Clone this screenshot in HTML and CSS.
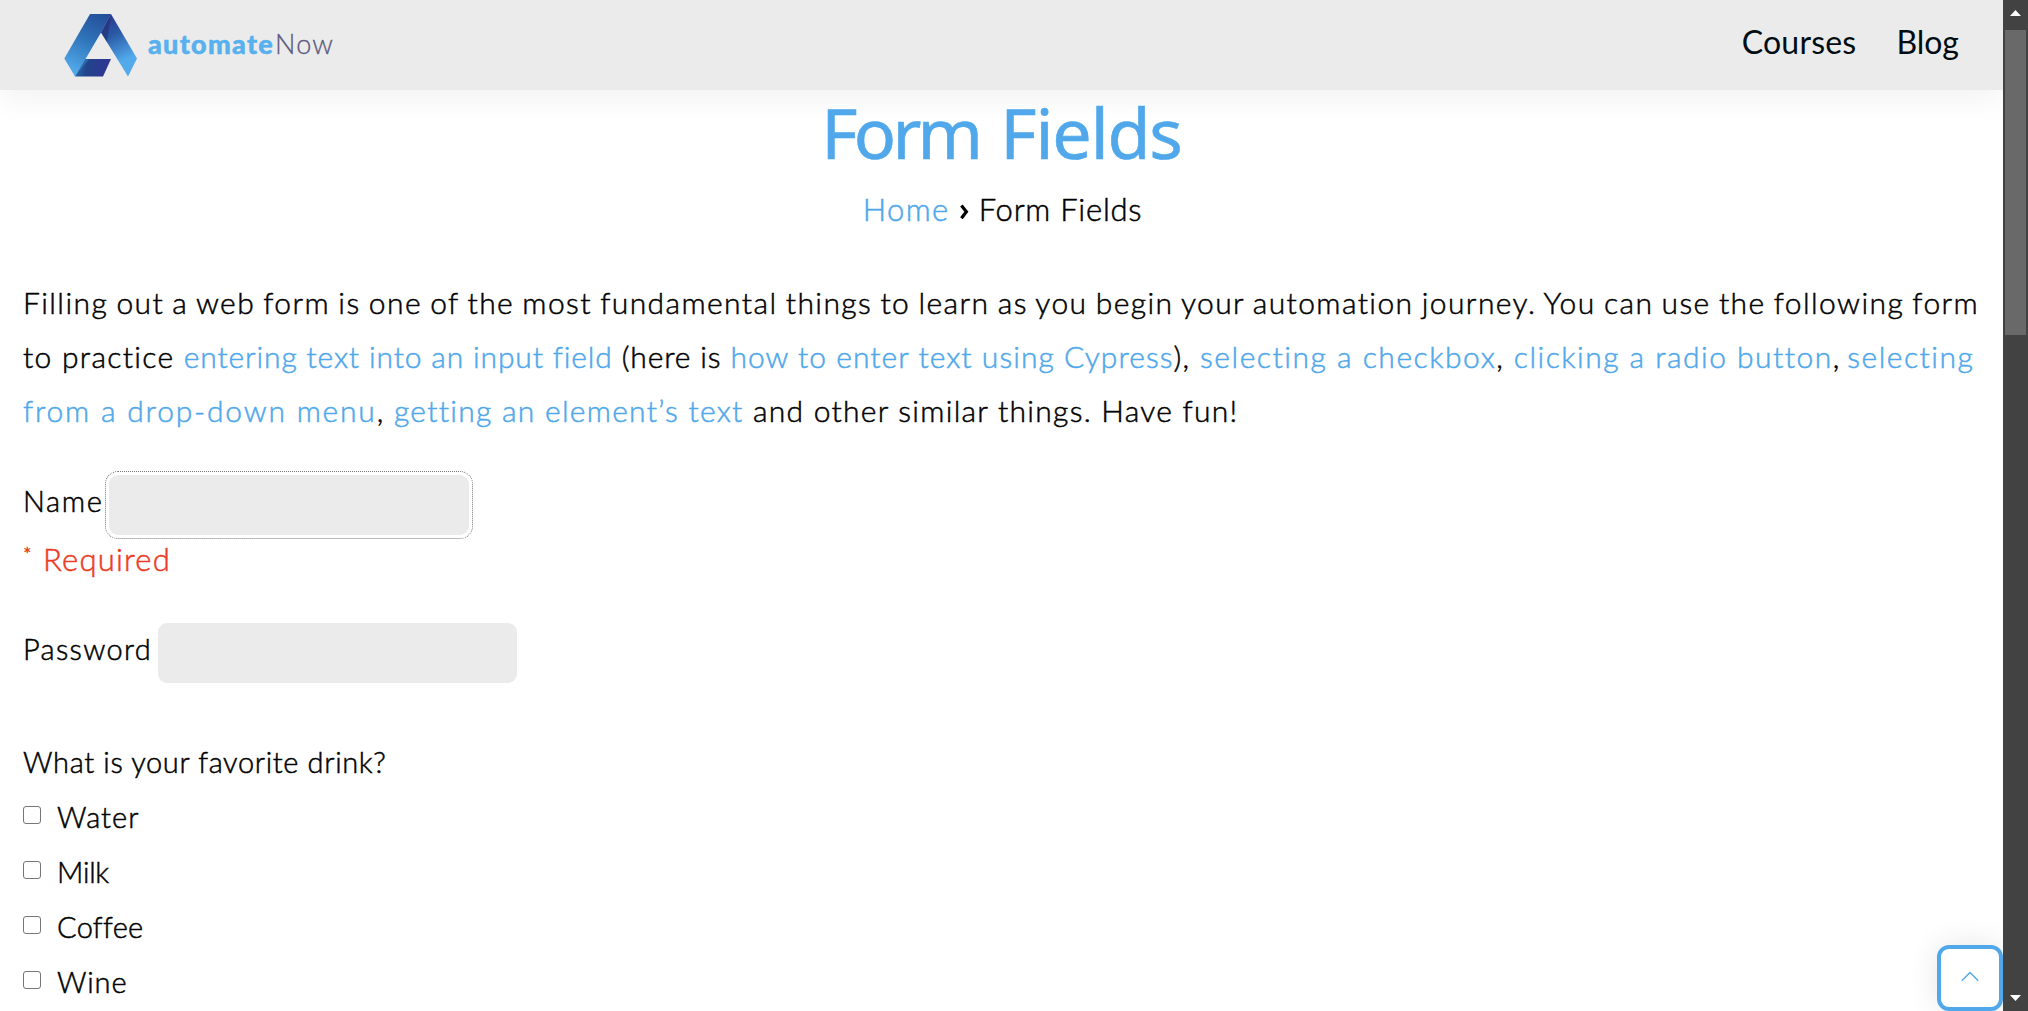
FILE: index.html
```
<!DOCTYPE html>
<html lang="en">
<head>
<meta charset="utf-8">
<title>Form Fields</title>
<link rel="stylesheet" href="styles.css">
</head>
<body>
<div class="page">
  <header class="site-header">
    <a class="brand">
      <svg class="brand-mark" width="74" height="64" viewBox="0 0 74 64">
        <defs>
          <linearGradient id="left" x1="38" y1="0" x2="10" y2="58" gradientUnits="userSpaceOnUse">
            <stop offset="0" stop-color="#24509a"/><stop offset=".45" stop-color="#2f72b8"/><stop offset="1" stop-color="#52aaeb"/>
          </linearGradient>
          <linearGradient id="right" x1="44" y1="2" x2="68" y2="52" gradientUnits="userSpaceOnUse">
            <stop offset="0" stop-color="#2b3990"/><stop offset=".35" stop-color="#2a5aa6"/><stop offset=".85" stop-color="#52aaeb"/>
          </linearGradient>
          <linearGradient id="base" x1="14" y1="52" x2="38" y2="56" gradientUnits="userSpaceOnUse">
            <stop offset="0" stop-color="#2566a8"/><stop offset=".35" stop-color="#22458c"/><stop offset="1" stop-color="#2b3990"/>
          </linearGradient>
        </defs>
        <path d="M26 0H47L37 18.5 21.5 45 11 62.5 .3 44.5Z" fill="url(#left)"/>
        <path d="M47 0 73 44.5 64 62.5 37 18.5Z" fill="url(#right)"/>
        <path d="M47 0 37 18.5 43 28Z" fill="#242c70" opacity=".55"/>
        <path d="M21.5 45H47L39 62.5H11Z" fill="url(#base)"/>
        <path d="M11 62.5 21.5 45 25 45.5Z" fill="#2a75b5" opacity=".7"/>
      </svg>
      <span class="brand-strong">automate</span><span class="brand-light">Now</span>
    </a>
    <nav class="nav"><a>Courses</a><a class="nav-blog">Blog</a></nav>
  </header>
  <main>
    <h1><span class="title-form">Form</span> <span class="title-fields">Fields</span></h1>
    <div class="crumbs"><a class="home">Home</a><svg width="9" height="16" viewBox="0 0 9 16"><path d="M1.4 1.5 6.4 7.8 1.4 14.2" fill="none" stroke="#000" stroke-width="3.2"/></svg><span class="here">Form Fields</span></div>
    <p class="intro">
      <span class="line first">Filling out a web form is one of the most fundamental things to learn as you begin your automation journey. You can use the following form</span>
      <span class="line"><span class="s130">to practice </span><a class="s085">entering text into an input field</a><span class="s085"> (here is </span><a class="s104">how to enter text using Cypress</a><span class="s137">), </span><a class="s155">selecting a checkbox</a><span class="s137">, </span><a class="s148">clicking a radio button</a>, <a class="s148">selecting</a></span>
      <span class="line"><a class="s180">from a drop-down menu</a><span class="s130">, </span><a class="s127">getting an element’s text</a><span class="last"> and other similar things. Have fun!</span></span>
    </p>
    <form>
      <div class="field"><label class="name-label">Name</label><input class="focused" type="text"></div>
      <div class="required"><sup>*</sup>Required</div>
      <div class="field"><label class="password-label">Password</label><input class="password" type="password"></div>
      <div class="question">What is your favorite drink?</div>
      <label class="choice"><span class="box"></span><span class="s110">Water</span></label>
      <label class="choice"><span class="box"></span><span class="milk">Milk</span></label>
      <label class="choice"><span class="box"></span><span class="coffee">Coffee</span></label>
      <label class="choice"><span class="box"></span><span class="s085">Wine</span></label>
    </form>
  </main>
  <a class="to-top"><svg width="18" height="11" viewBox="0 0 18 11"><path d="M.8 9.8 9 1.5 17.2 9.8" fill="none" stroke="#50a8eb" stroke-width="1.4"/></svg></a>
</div>
<div class="scrollbar">
  <svg class="arrow" width="11" height="6" viewBox="0 0 11 6"><path d="M0 6 5.5 0 11 6Z" fill="#fff"/></svg>
  <div class="thumb"></div>
  <svg class="arrow" width="11" height="6" viewBox="0 0 11 6"><path d="M0 0 5.5 6 11 0Z" fill="#fff"/></svg>
</div>
</body>
</html>
```
FILE: styles.css
```
* { box-sizing: border-box; }
body {
  margin: 0;
  height: 1011px;
  display: flex;
  overflow: hidden;
  background: #fff;
  color: #000;
  font: 300 30px/54px Lato, sans-serif;
  -webkit-text-stroke: .5px currentColor;
}
a { color: #50a8eb; text-decoration: none; }
.page { position: relative; width: 2003px; height: 1011px; overflow: hidden; }

.site-header {
  height: 90px;
  padding: 0 44px 0 64px;
  display: flex;
  justify-content: space-between;
  background: #ebebeb;
  box-shadow: 0 10px 30px rgba(0, 0, 0, .05);
}
.brand { display: flex; align-items: flex-start; padding-top: 14px; font-size: 27px; line-height: 59px; }
.brand-mark { margin-right: 10px; }
.brand-strong { width: 127px; color: #58b0ee; font-weight: 900; letter-spacing: 1.3px; }
.brand-light { color: #5d5a80; letter-spacing: 1.2px; -webkit-text-stroke: .3px; }
.nav { display: flex; gap: 40px; font-size: 32px; line-height: 83px; font-weight: 400; -webkit-text-stroke: 0; letter-spacing: .2px; }
.nav a { color: #010d13; }
.nav .nav-blog { letter-spacing: 0; }

h1 {
  margin: 0;
  text-align: center;
  color: #50a8eb;
  font: 400 70px/84px "Noto Sans", sans-serif;
  word-spacing: 3px;
  -webkit-text-stroke: .6px;
}
.title-form { letter-spacing: -3.8px; }
.title-fields { letter-spacing: -1.2px; }
.crumbs { display: flex; justify-content: center; align-items: center; margin-top: 8px; padding-left: 2px; font-size: 31px; gap: 13px; }
.crumbs svg { margin: 5px 0 0 -3px; }
.home { letter-spacing: 1.4px; }
.here { letter-spacing: .75px; margin-left: -3px; }
.intro { margin: 39px 0 38px; padding-left: 23px; }
.line { display: block; white-space: nowrap; }
.first { letter-spacing: 1.41px; word-spacing: -1.3px; }
.last { letter-spacing: 1.27px; }

form { padding-left: 23px; }
.field { display: flex; height: 60px; font-size: 29px; line-height: 52px; }
.name-label { width: 86px; letter-spacing: 1.7px; }
.password-label { width: 135px; letter-spacing: 1.3px; }
input { width: 360px; height: 60px; border: 0; border-radius: 9px; background: #ebebeb; }
.password { width: 359px; }
.focused { outline: 1px dotted #777; outline-offset: 3px; }
.required { margin: -3px 0 37px; color: #ec3b25; font-size: 31px; letter-spacing: 1.2px; }
sup { display: inline-block; width: 20px; font-size: 20px; line-height: 0; vertical-align: 9px; }
.question { margin-top: 51px; font-size: 29px; line-height: 55px; letter-spacing: .65px; }
.choice { display: flex; align-items: center; height: 55px; gap: 16px; font-size: 29px; line-height: 55px; }
.box { width: 18px; height: 18px; border: 1.5px solid #767676; border-radius: 3px; margin-bottom: 4px; }

.milk { letter-spacing: -.2px; }
.coffee { letter-spacing: .3px; }
.s085 { letter-spacing: .85px; }
.s104 { letter-spacing: 1.04px; }
.s110 { letter-spacing: 1.1px; }
.s127 { letter-spacing: 1.27px; }
.s130 { letter-spacing: 1.3px; }
.s137 { letter-spacing: 1.37px; }
.s148 { letter-spacing: 1.48px; }
.s155 { letter-spacing: 1.52px; }
.s180 { letter-spacing: 1.8px; }

.to-top {
  position: absolute;
  right: 0;
  bottom: 0;
  width: 66px;
  height: 66px;
  display: flex;
  align-items: center;
  justify-content: center;
  padding-bottom: 3px;
  border: 4px solid #50a8eb;
  border-radius: 12px;
  background: #fff;
  box-shadow: 0 0 30px rgba(0, 0, 0, .1);
}
.scrollbar {
  width: 25px;
  height: 1011px;
  padding: 10px 0;
  display: flex;
  flex-direction: column;
  align-items: center;
  background: #424242;
}
.thumb { width: 21px; height: 305px; margin: 14px 0 auto; background: #696969; }
```
